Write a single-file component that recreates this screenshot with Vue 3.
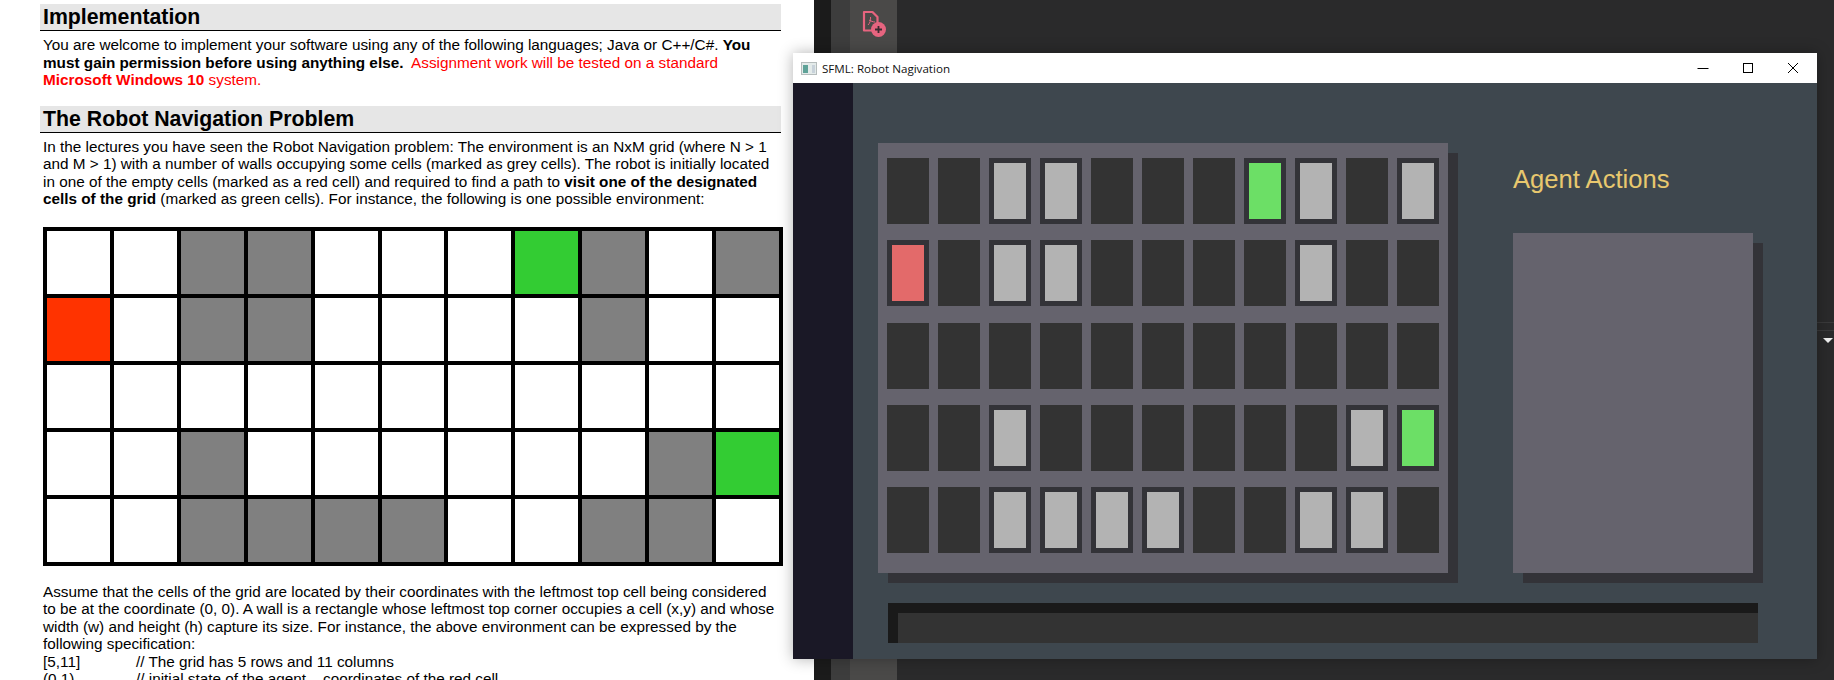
<template>
  <div class="screen">
    <main class="doc">
      <h2 class="doc-title first">Implementation</h2>
      <p class="para intro">
        You are welcome to implement your software using any of the following languages; Java or C++/C#. <b>You</b><br>
        <b>must gain permission before using anything else.</b>&nbsp; <span class="red">Assignment work will be tested on a standard</span><br>
        <span class="red"><b>Microsoft Windows 10</b> system.</span>
      </p>

      <h2 class="doc-title">The Robot Navigation Problem</h2>
      <p class="para">
        In the lectures you have seen the Robot Navigation problem: The environment is an NxM grid (where N &gt; 1<br>
        and M &gt; 1) with a number of walls occupying some cells (marked as grey cells). The robot is initially located<br>
        in one of the empty cells (marked as a red cell) and required to find a path to <b>visit one of the designated</b><br>
        <b>cells of the grid</b> (marked as green cells). For instance, the following is one possible environment:
      </p>

      <div class="paper-grid">
        <template v-for="(row, y) in cells" :key="y">
          <div v-for="(cell, x) in row" :key="x" class="paper-cell" :class="'paper-' + cell"></div>
        </template>
      </div>

      <p class="para after-grid">
        Assume that the cells of the grid are located by their coordinates with the leftmost top cell being considered<br>
        to be at the coordinate (0, 0). A wall is a rectangle whose leftmost top corner occupies a cell (x,y) and whose<br>
        width (w) and height (h) capture its size. For instance, the above environment can be expressed by the<br>
        following specification:
      </p>
      <div class="spec"><span>[5,11]</span><span>// The grid has 5 rows and 11 columns</span></div>
      <div class="spec"><span>(0,1)</span><span>// initial state of the agent – coordinates of the red cell</span></div>
    </main>

    <aside class="rail">
      <div class="rail-dark"></div>
      <div class="rail-tab"></div>
      <div class="rail-tab active">
        <svg class="pdf-icon" width="26" height="28" viewBox="0 0 26 28" fill="none">
          <path d="M2 2h8.5l5 5v13.5H2z" stroke="#e6647f" stroke-width="2.2" stroke-linejoin="round" />
          <path d="M6 15c2-2 3-5 2.5-8M7 10c2 1 4 2 6 2" stroke="#e6647f" stroke-width="1" />
          <circle cx="16.5" cy="19.5" r="7.5" fill="#e6647f" />
          <path d="M16.5 16v7M13 19.5h7" stroke="#3a2a30" stroke-width="1.8" />
        </svg>
      </div>
    </aside>

    <div class="editor-back">
      <div class="side-lines"></div>
      <div class="side-arrow"></div>
    </div>

    <section class="window">
      <header class="titlebar">
        <svg class="app-icon" width="16" height="13" viewBox="0 0 16 13">
          <rect x="0.5" y="0.5" width="15" height="12" fill="#e4ebea" stroke="#b5bcbc" />
          <rect x="2" y="3" width="5" height="8" fill="#5fa298" />
          <rect x="11" y="3" width="3" height="8" fill="#c8d2da" />
        </svg>
        <span class="title-text">SFML: Robot Nagivation</span>
        <div class="win-controls">
          <svg width="12" height="12" viewBox="0 0 12 12"><path d="M0.5 6.5h11" stroke="#000" /></svg>
          <svg width="12" height="12" viewBox="0 0 12 12"><rect x="1.5" y="1.5" width="9" height="9" fill="none" stroke="#000" /></svg>
          <svg width="12" height="12" viewBox="0 0 12 12"><path d="M1 1l10 10M11 1L1 11" stroke="#000" /></svg>
        </div>
      </header>

      <div class="client">
        <div class="sidebar"></div>
        <div class="stage">
          <div class="top-row">
            <div class="board">
              <div class="board-grid">
                <template v-for="(row, y) in cells" :key="y">
                  <div v-for="(cell, x) in row" :key="x" class="tile" :class="'tile-' + cell"></div>
                </template>
              </div>
            </div>
            <div class="actions">
              <div class="actions-title">Agent Actions</div>
              <div class="actions-box"></div>
            </div>
          </div>
          <div class="status-bar"><div class="status-inner"></div></div>
        </div>
      </div>
    </section>
  </div>
</template>

<script setup>
// e = empty, w = wall, r = robot, g = goal
const cells = [
  'eewweeegwew',
  'rewweeeewee',
  'eeeeeeeeeee',
  'eeweeeeeewg',
  'eewwwweewwe'
].map((row) => row.split(''))
</script>

<style>
html,
body {
  margin: 0;
  background: #2a2a2b;
  overflow: hidden;
}
</style>

<style scoped>
.screen {
  position: relative;
  display: flex;
  width: 1834px;
  height: 680px;
  overflow: hidden;
  background: #2a2a2b;
}

.doc {
  box-sizing: border-box;
  width: 814px;
  height: 680px;
  flex: none;
  padding: 4px 0 0 40px;
  overflow: hidden;
  background: #fff;
  color: #000;
  font-family: "Liberation Sans", Arial, sans-serif;
  font-size: 15.3px;
  line-height: 17.5px;
  white-space: nowrap;
}

.doc-title {
  box-sizing: border-box;
  width: 741px;
  height: 27px;
  margin: 0 0 5px;
  padding-left: 3px;
  background: #e6e6e6;
  border-bottom: 1px solid #000;
  font-size: 21.3px;
  font-weight: 700;
  line-height: 26px;
}

.para {
  margin: 0;
  padding-left: 3px;
}

.intro {
  margin-bottom: 17px;
}

.red {
  color: #f00;
}

.paper-grid {
  display: grid;
  grid-template-columns: repeat(11, 1fr);
  grid-auto-rows: 63px;
  gap: 4px;
  width: 740px;
  margin: 19px 0 0 3px;
  padding: 4px;
  box-sizing: border-box;
  background: #000;
}

.paper-e {
  background: #fff;
}

.paper-w {
  background: #808080;
}

.paper-r {
  background: #ff3300;
}

.paper-g {
  background: #33cc33;
}

.after-grid {
  margin-top: 17px;
}

.spec {
  display: flex;
  padding-left: 3px;
}

.spec span:first-child {
  width: 93px;
}

.rail {
  display: flex;
  flex: none;
  width: 83px;
  height: 680px;
}

.rail-dark {
  width: 17px;
  background: #1b1b1b;
}

.rail-tab {
  width: 19px;
  background: #3d3d3d;
}

.rail-tab.active {
  width: 47px;
  background: #4a4948;
}

.pdf-icon {
  display: block;
  margin: 10px 0 0 12px;
}

.editor-back {
  flex: 1;
  position: relative;
  background: #2a2a2b;
}

/* splitter marks in the strip right of the window */
.side-lines {
  position: absolute;
  right: 0;
  top: 322px;
  width: 17px;
  height: 7px;
  border-top: 1px solid #3a3a3b;
  border-bottom: 1px solid #3a3a3b;
}

.side-arrow {
  position: absolute;
  right: 1px;
  top: 338px;
  width: 0;
  height: 0;
  border-left: 5px solid transparent;
  border-right: 5px solid transparent;
  border-top: 5px solid #f0f0f0;
}

.window {
  position: absolute;
  left: 793px;
  top: 53px;
  width: 1024px;
  height: 606px;
  box-shadow: 0 0 14px rgba(0, 0, 0, 0.3);
}

.titlebar {
  display: flex;
  align-items: center;
  height: 30px;
  padding-left: 8px;
  background: #fff;
}

.app-icon {
  flex: none;
}

.title-text {
  margin-left: 5px;
  color: #111;
  font-family: "Open Sans", sans-serif;
  font-size: 11.6px;
}

.win-controls {
  display: flex;
  gap: 33px;
  margin-left: auto;
  margin-right: 18px;
}

.win-controls svg {
  display: block;
}

.client {
  display: flex;
  height: 576px;
}

.sidebar {
  width: 60px;
  background: #1a1826;
}

.stage {
  flex: 1;
  padding: 60px 0 0 25px;
  background: #3e474e;
}

.top-row {
  display: flex;
  align-items: flex-start;
}

.board {
  box-sizing: border-box;
  width: 570px;
  height: 430px;
  padding: 15px 0 0 9px;
  background: #65636d;
  box-shadow: 10px 10px 0 #333338;
}

.board-grid {
  display: grid;
  grid-template-columns: repeat(11, 42px);
  grid-auto-rows: 66px;
  column-gap: 9px;
  row-gap: 16.25px;
}

.tile {
  box-sizing: border-box;
  background: #333333;
}

.tile-w {
  border: 5px solid #333338;
  background: #b3b3b3;
}

.tile-r {
  border: 5px solid #333338;
  background: #e36a6a;
}

.tile-g {
  border: 5px solid #333338;
  background: #6cdf66;
}

.actions {
  margin-left: 65px;
}

.actions-title {
  box-sizing: border-box;
  height: 90px;
  padding-top: 20px;
  color: #e8c86e;
  font-family: "Liberation Sans", Arial, sans-serif;
  font-size: 25.6px;
  line-height: 32px;
}

.actions-box {
  width: 240px;
  height: 340px;
  background: #65636d;
  box-shadow: 10px 10px 0 #333338;
}

.status-bar {
  box-sizing: border-box;
  width: 870px;
  height: 40px;
  margin: 30px 0 0 10px;
  padding: 10px 0 0 10px;
  background: #1a1a1a;
}

.status-inner {
  height: 30px;
  background: #333333;
}
</style>
